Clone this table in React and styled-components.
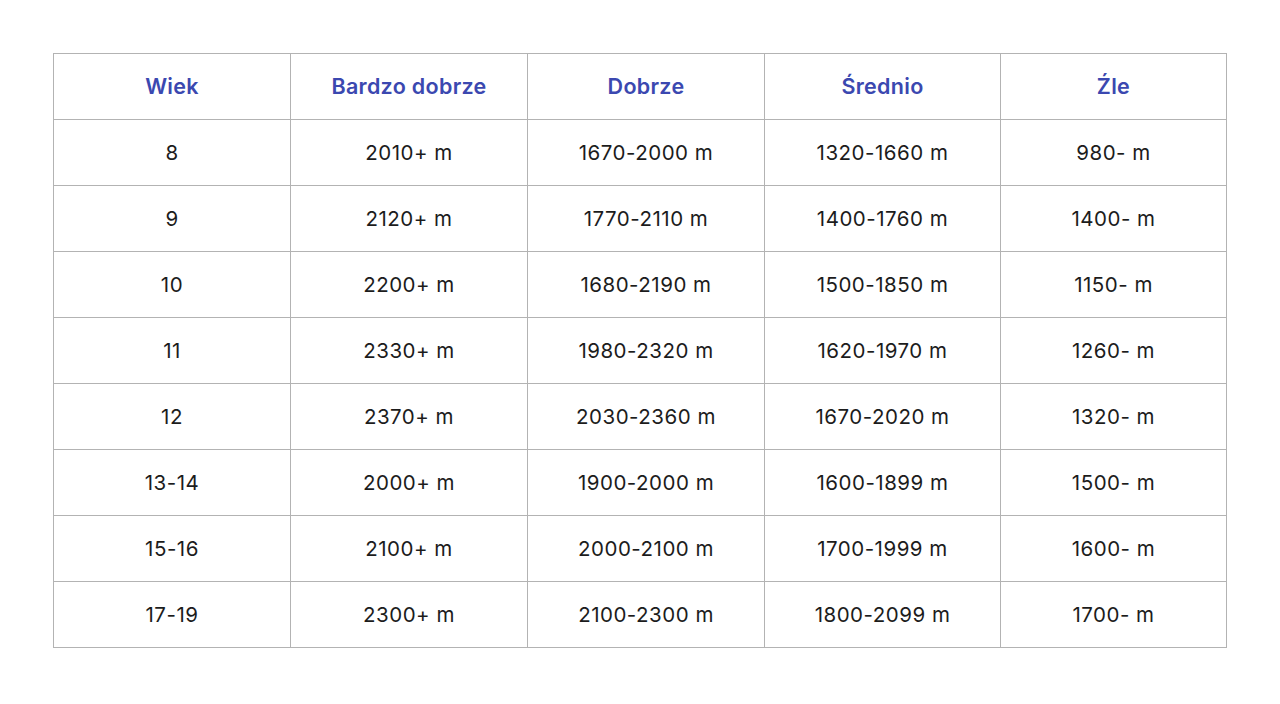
import React from "react";
import styled, { createGlobalStyle } from "styled-components";

const Global = createGlobalStyle`
  html, body { margin: 0; padding: 0; background: #ffffff; }
  body { font-family: Inter, "Noto Sans", sans-serif; }
`;

const Page = styled.div`
  width: 1280px;
  height: 704px;
  padding: 53px 0 0 53px;
  box-sizing: border-box;
  background: #fff;
`;

const Table = styled.table`
  border-collapse: collapse;
  table-layout: fixed;
  width: 1173px;
`;

const HeadCell = styled.th`
  border: 1px solid #b3b3b3;
  height: 66px;
  padding: 0 0 1px 0;
  box-sizing: border-box;
  font-size: 21.5px;
  font-weight: 600;
  letter-spacing: 0.3px;
  color: #3b48b0;
  text-align: center;
  vertical-align: middle;
`;

const Cell = styled.td`
  border: 1px solid #b3b3b3;
  height: 66px;
  padding: 0;
  box-sizing: border-box;
  font-size: 20.5px;
  font-weight: 400;
  letter-spacing: 0.5px;
  color: #1c1c1c;
  text-align: center;
  vertical-align: middle;
`;

const cols = [237, 237, 237, 236, 226];
const headers = ["Wiek", "Bardzo dobrze", "Dobrze", "Średnio", "Źle"];
const rows = [
  ["8", "2010+ m", "1670-2000 m", "1320-1660 m", "980- m"],
  ["9", "2120+ m", "1770-2110 m", "1400-1760 m", "1400- m"],
  ["10", "2200+ m", "1680-2190 m", "1500-1850 m", "1150- m"],
  ["11", "2330+ m", "1980-2320 m", "1620-1970 m", "1260- m"],
  ["12", "2370+ m", "2030-2360 m", "1670-2020 m", "1320- m"],
  ["13-14", "2000+ m", "1900-2000 m", "1600-1899 m", "1500- m"],
  ["15-16", "2100+ m", "2000-2100 m", "1700-1999 m", "1600- m"],
  ["17-19", "2300+ m", "2100-2300 m", "1800-2099 m", "1700- m"],
];

export default function App() {
  return (
    <Page>
      <Global />
      <Table>
        <colgroup>
          {cols.map((w, i) => (
            <col key={i} style={{ width: w }} />
          ))}
        </colgroup>
        <thead>
          <tr>
            {headers.map((h) => (
              <HeadCell key={h}>{h}</HeadCell>
            ))}
          </tr>
        </thead>
        <tbody>
          {rows.map((r, i) => (
            <tr key={i}>
              {r.map((c, j) => (
                <Cell key={j}>{c}</Cell>
              ))}
            </tr>
          ))}
        </tbody>
      </Table>
    </Page>
  );
}
